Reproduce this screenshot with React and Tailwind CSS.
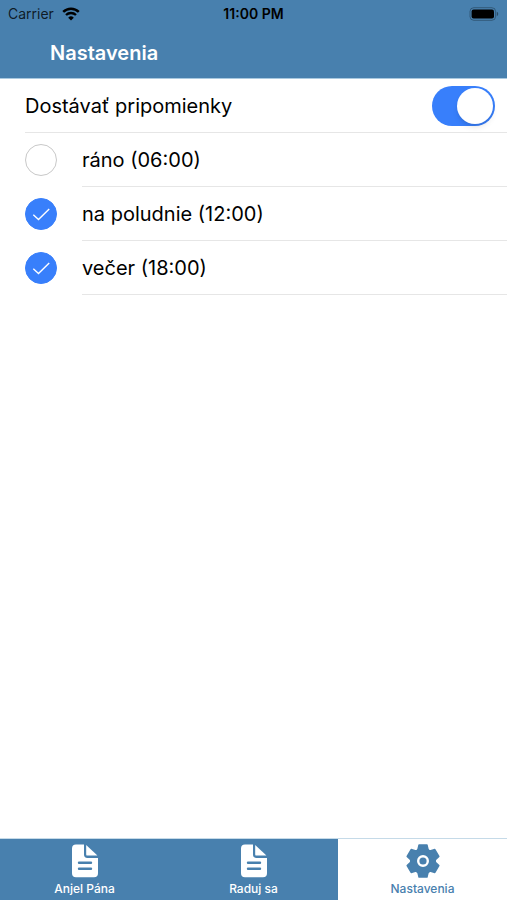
import React, { useState } from "react";

const initialReminders = [
  { id: "morning", label: "ráno (06:00)", checked: false },
  { id: "noon", label: "na poludnie (12:00)", checked: true },
  { id: "evening", label: "večer (18:00)", checked: true },
];

function DocumentIcon() {
  return (
    <svg viewBox="0 0 36 36" className="size-9" fill="currentColor">
      <path
        fillRule="evenodd"
        d="M9 1.5h8v10a3.4 3.4 0 0 0 3.4 3.4H31v15.3a4 4 0 0 1-4 4H9a4 4 0 0 1-4-4V5.5a4 4 0 0 1 4-4ZM12 18.6a1.2 1.2 0 0 0 0 2.4h12a1.2 1.2 0 0 0 0-2.4ZM12 24.6a1.2 1.2 0 0 0 0 2.4h12a1.2 1.2 0 0 0 0-2.4Z"
      />
      <path d="M19.2 2v9.400a1.2 1.2 0 0 0 1.2 1.2h10Z" />
    </svg>
  );
}

// one bar makes two opposite teeth of the gear
const toothBar = "M14 2h8l1.2 5v22L22 34h-8l-1.200-5V7Z";

function GearIcon() {
  return (
    <svg viewBox="0 0 36 36" className="size-9" fill="currentColor">
      <g stroke="currentColor" strokeWidth="1.4" strokeLinejoin="round">
        <circle cx="18" cy="18" r="12.4" />
        <path d={toothBar} />
        <path d={toothBar} transform="rotate(60 18 18)" />
        <path d={toothBar} transform="rotate(120 18 18)" />
      </g>
      <circle
        cx="18"
        cy="18"
        r="4.8"
        fill="none"
        stroke="white"
        strokeWidth="2.4"
      />
    </svg>
  );
}

const tabs = [
  { id: "anjel", label: "Anjel Pána", icon: DocumentIcon },
  { id: "raduj", label: "Raduj sa", icon: DocumentIcon },
  { id: "settings", label: "Nastavenia", icon: GearIcon },
];

function StatusBar() {
  return (
    <div className="grid h-7 grid-cols-3 items-center px-2 text-black">
      <div className="flex items-center gap-2 text-sm text-black/80">
        Carrier
        <svg viewBox="0 0 18 14" className="h-3.5 w-[18px]" fill="none">
          <path
            d="M1.2 4.9a11.2 11.2 0 0 1 15.6 0"
            stroke="#000"
            strokeWidth="2.5"
          />
          <path
            d="M4 8a7.2 7.2 0 0 1 10 0"
            stroke="#000"
            strokeWidth="2.3"
          />
          <path d="M9 13.6 6.2 10.7a4 4 0 0 1 5.6 0Z" fill="#000" />
        </svg>
      </div>
      <span className="text-center text-sm font-semibold">11:00 PM</span>
      <svg viewBox="0 0 30 14" className="h-3.5 w-[30px] justify-self-end">
        <rect
          x="1"
          y="0.7"
          width="25.6"
          height="12.6"
          rx="3.8"
          fill="none"
          stroke="#000"
          strokeOpacity="0.3"
        />
        <rect x="2.6" y="2.4" width="22.4" height="9.2" rx="2" fill="#000" />
        <path d="M27.8 4.8a2.4 2.4 0 0 1 0 4.4Z" fillOpacity="0.4" />
      </svg>
    </div>
  );
}

function Toggle({ id, checked, onChange }) {
  return (
    <input
      id={id}
      type="checkbox"
      role="switch"
      checked={checked}
      onChange={onChange}
      className="h-10 w-[63px] shrink-0 cursor-pointer appearance-none rounded-full bg-gray-200 p-0.5 before:block before:size-9 before:rounded-full before:bg-white before:shadow-md before:transition-transform checked:bg-[#387ffb] checked:before:translate-x-[23px]"
    />
  );
}

function ReminderRow({ reminder, onChange }) {
  return (
    <li className="flex h-[54px] items-center gap-[25px] pl-[25px]">
      <span className="relative grid size-8 shrink-0">
        <input
          id={reminder.id}
          type="checkbox"
          checked={reminder.checked}
          onChange={onChange}
          className="peer size-8 cursor-pointer appearance-none rounded-full border border-[#c8c8c8] bg-white checked:border-[#387ffb] checked:bg-[#387ffb]"
        />
        <svg
          viewBox="0 0 32 32"
          fill="none"
          stroke="white"
          strokeWidth="1.4"
          className="pointer-events-none absolute inset-0 hidden size-8 peer-checked:block"
        >
          <path d="m8.3 16.8 5.2 4.8L24.2 11" />
        </svg>
      </span>
      <label
        htmlFor={reminder.id}
        className="flex h-full flex-1 items-center border-b border-[#e6e6e6] text-xl"
      >
        {reminder.label}
      </label>
    </li>
  );
}

export default function App() {
  const [enabled, setEnabled] = useState(true);
  const [reminders, setReminders] = useState(initialReminders);
  const [activeTab, setActiveTab] = useState("settings");

  const toggleReminder = (id) => {
    setReminders((prev) =>
      prev.map((r) => (r.id === id ? { ...r, checked: !r.checked } : r))
    );
  };

  return (
    <div className="flex min-h-screen flex-col bg-white font-[Inter,'Liberation_Sans',sans-serif] text-black">
      <header className="border-b border-[#a9c9e0] bg-[#4880ae]">
        <StatusBar />
        <h1 className="flex h-[50px] items-center pl-[50px] text-xl font-semibold text-white">
          Nastavenia
        </h1>
      </header>

      <main className="flex-1">
        <div className="pl-[25px]">
          <div className="flex h-[54px] items-center justify-between border-b border-[#e6e6e6] pr-3">
            <label htmlFor="reminders" className="text-xl">
              Dostávať pripomienky
            </label>
            <Toggle
              id="reminders"
              checked={enabled}
              onChange={() => setEnabled(!enabled)}
            />
          </div>
        </div>
        {enabled && (
          <ul>
            {reminders.map((reminder) => (
              <ReminderRow
                key={reminder.id}
                reminder={reminder}
                onChange={() => toggleReminder(reminder.id)}
              />
            ))}
          </ul>
        )}
      </main>

      <nav className="grid grid-cols-3 border-t border-[#c5dae8]">
        {tabs.map(({ id, label, icon: Icon }) => (
          <button
            key={id}
            type="button"
            onClick={() => setActiveTab(id)}
            className={`flex h-[61px] flex-col items-center gap-0.5 pt-1 text-xs font-medium ${
              activeTab === id
                ? "bg-white text-[#4880ae]"
                : "bg-[#4880ae] text-white"
            }`}
          >
            <Icon />
            {label}
          </button>
        ))}
      </nav>
    </div>
  );
}
